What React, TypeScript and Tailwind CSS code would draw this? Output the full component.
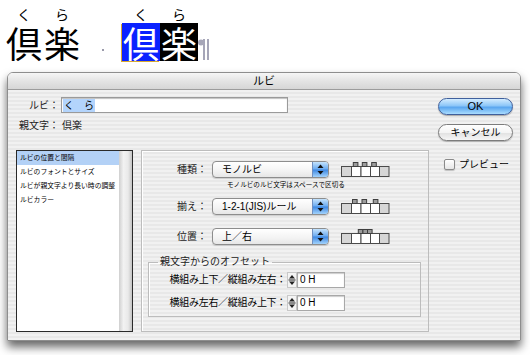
const stripes =
  'bg-[repeating-linear-gradient(180deg,#f1f1f1_0px,#f1f1f1_2px,#e8e8e8_2px,#e8e8e8_4px)]'

function RubyColumn({ rt, base, boxed }: { rt: string; base: string; boxed?: string }) {
  return (
    <div className="flex flex-col items-center w-[38px]">
      <span className="h-[16px] text-[14px] leading-[15px]">{rt}</span>
      <span className={`h-[38px] w-[38px] text-center text-[36px] leading-[39px] ${boxed ?? ''}`}>{base}</span>
    </div>
  )
}

function PopupArrows() {
  return (
    <svg width="7" height="11" viewBox="0 0 7 11">
      <path d="M3.5 0.5 L6.5 4 L0.5 4 Z" fill="#111" />
      <path d="M3.5 10.5 L6.5 7 L0.5 7 Z" fill="#111" />
    </svg>
  )
}

function Popup({ label }: { label: string }) {
  return (
    <div className="ml-[5px] flex h-[17px] w-[117px] overflow-hidden rounded-[4px] border border-[#8d8d8d] bg-[linear-gradient(180deg,#ffffff,#f3f3f3_60%,#e6e6e6)] shadow-[0_1px_1px_rgba(0,0,0,0.15)]">
      <span className="flex-1 pl-[9px] text-[10px] leading-[15px]">{label}</span>
      <span className="flex w-[16px] items-center justify-center border-l border-[#6f8fc0] bg-[linear-gradient(180deg,#c4e3fd,#6aaaf0_48%,#3d87e2_52%,#a3d3fc)]">
        <PopupArrows />
      </span>
    </div>
  )
}

// ruby layout diagrams next to each popup; bumps = ruby chars, cells = base chars
function LayoutIcon({ bumps }: { bumps: number[] }) {
  const cells = [
    [0.5, 10.5, true],
    [10.5, 20, false],
    [20, 29.5, false],
    [29.5, 38.5, false],
    [38.5, 48, true],
  ] as const
  return (
    <svg className="ml-[12px]" width="49" height="15" viewBox="0 0 49 15">
      {cells.map(([a, b, gray], i) => (
        <rect key={i} x={a} y={4.5} width={b - a} height={10} fill={gray ? '#d6d6d6' : '#fff'} stroke="#4a4a4a" strokeWidth="1" />
      ))}
      {bumps.map((x, i) => (
        <rect key={i} x={x} y={0.5} width={4.6} height={4} fill="#9c9c9c" stroke="#3f3f3f" strokeWidth="1" />
      ))}
    </svg>
  )
}

function Stepper() {
  return (
    <svg className="ml-[1px]" width="10" height="16" viewBox="0 0 10 16">
      <rect x="0.5" y="0.5" width="9" height="15" fill="#f4f4f4" stroke="#c8c8c8" />
      <path d="M5 3 L8 6.5 L2 6.5 Z" fill="#222" />
      <line x1="1.5" y1="8" x2="8.5" y2="8" stroke="#222" strokeWidth="1" />
      <path d="M5 13 L8 9.5 L2 9.5 Z" fill="#222" />
    </svg>
  )
}

function OffsetRow({ label, className }: { label: string; className?: string }) {
  return (
    <div className={`flex h-[16px] items-center ${className ?? ''}`}>
      <span className="w-[137px] text-right text-[10px] leading-[16px] tracking-[-0.3px]">{label}</span>
      <Stepper />
      <div className="h-[16px] w-[48px] border border-[#a8a8a8] bg-white pl-[2px] text-[10px] leading-[13px] shadow-[inset_0_1px_1px_rgba(0,0,0,0.2)]">
        0 H
      </div>
    </div>
  )
}

const listItems = ['ルビの位置と間隔', 'ルビのフォントとサイズ', 'ルビが親文字より長い時の調整', 'ルビカラー']

export default function App() {
  return (
    <div className="h-[355px] w-[530px] overflow-hidden bg-white text-black">
      {/* sample text with mono ruby */}
      <div className="flex h-[72px] items-start pl-[5px] pt-[7px] font-['Noto_Sans_CJK_JP',sans-serif]">
        <RubyColumn rt="く" base="倶" />
        <RubyColumn rt="ら" base="楽" />
        <span className="ml-[21px] mt-[42px] h-[2px] w-[2px] bg-[#9a9aaa]" />
        <div className="ml-[18px] flex">
          <RubyColumn rt="く" base="倶" boxed="bg-[#0a22ff] text-white shadow-[-1px_1px_0_#d8a830]" />
          <RubyColumn rt="ら" base="楽" boxed="bg-black text-white" />
        </div>
        <svg className="mt-[31px]" width="12" height="22" viewBox="0 0 12 22">
          <circle cx="3" cy="4.5" r="3" fill="#a6a6b8" />
          <rect x="5" y="1" width="2" height="21" fill="#a6a6b8" />
          <rect x="9" y="1" width="2" height="21" fill="#a6a6b8" />
        </svg>
      </div>

      {/* dialog */}
      <div className="ml-[7px] flex h-[269px] w-[514px] flex-col overflow-hidden rounded-t-[6px] border border-[#8e8e8e] font-['Liberation_Sans','Noto_Sans_CJK_JP',sans-serif] shadow-[0_6px_10px_rgba(0,0,0,0.6)]">
        <div className="flex h-[17px] shrink-0 items-center justify-center border-b border-[#9c9c9c] bg-[linear-gradient(180deg,#f6f6f6,#e4e4e4_50%,#d6d6d6)] text-[11px]">
          ルビ
        </div>
        <div className={`flex flex-1 pl-[8px] pr-[7px] ${stripes}`}>
          <div className="flex w-[413px] flex-col pt-[7px]">
            <div className="flex h-[16px] items-center">
              <span className="w-[43px] text-right text-[10px] text-[#222]">ルビ：</span>
              <div className="ml-[2px] flex h-[16px] w-[227px] items-center border border-[#9a9a9a] bg-white pl-[1px] shadow-[inset_0_1px_1px_rgba(0,0,0,0.25)]">
                <span className="bg-[#b3d4fc] px-[1px] text-[10px] leading-[13px]">く　ら</span>
              </div>
            </div>
            <div className="mt-[6px] flex h-[12px] items-center text-[10px] text-[#222]">
              <span className="w-[43px] text-right">親文字：</span>
              <span className="pl-[3px]">倶楽</span>
            </div>

            <div className="mt-[19px] flex h-[182px] gap-[8px]">
              {/* category list */}
              <div className="flex w-[117px] border border-[#2a2a2a] bg-white">
                <div className="flex-1">
                  {listItems.map((t, i) => (
                    <div
                      key={t}
                      className={`h-[14px] pl-[3px] text-[6.8px] leading-[14px] whitespace-nowrap ${i === 0 ? 'bg-[#b3d1f6]' : ''}`}
                    >
                      {t}
                    </div>
                  ))}
                </div>
                <div className="w-[13px] bg-[linear-gradient(90deg,#cfcfcf,#f2f2f2_35%,#e9e9e9_70%,#c4c4c4)]" />
              </div>

              {/* settings panel */}
              <div className="flex w-[288px] flex-col border border-[#bdbdbd] pt-[10px] shadow-[inset_1px_1px_0_#ffffff]">
                <div className="flex h-[17px] items-center">
                  <span className="w-[65px] text-right text-[10px] text-[#222]">種類：</span>
                  <Popup label="モノルビ" />
                  <LayoutIcon bumps={[12.3, 21.3, 30.7]} />
                </div>
                <div className="mt-[3px] h-[8px] pl-[85px] text-[6.6px] leading-[8px] whitespace-nowrap">
                  モノルビのルビ文字はスペースで区切る
                </div>
                <div className="mt-[9px] flex h-[17px] items-center">
                  <span className="w-[65px] text-right text-[10px] text-[#222]">揃え：</span>
                  <Popup label="1-2-1(JIS)ルール" />
                  <LayoutIcon bumps={[11.5, 21, 32.3]} />
                </div>
                <div className="mt-[13px] flex h-[17px] items-center">
                  <span className="w-[65px] text-right text-[10px] text-[#222]">位置：</span>
                  <Popup label="上／右" />
                  <LayoutIcon bumps={[17.3, 21.9, 26.5]} />
                </div>

                <fieldset className="ml-[6px] mt-[11px] w-[273px] border border-[#bcbcbc] pb-[5px] shadow-[inset_1px_1px_0_#ffffff]">
                  <legend className="ml-[9px] px-[2px] text-[10px] leading-[12px] text-[#222]">親文字からのオフセット</legend>
                  <OffsetRow label="横組み上下／縦組み左右：" className="mt-[4px]" />
                  <OffsetRow label="横組み左右／縦組み上下：" className="mt-[7px]" />
                </fieldset>
              </div>
            </div>
          </div>

          {/* buttons */}
          <div className="ml-[9px] flex w-[75px] flex-col pt-[8px]">
            <button className="h-[17px] rounded-full border border-[#3f5f9c] bg-[linear-gradient(180deg,#d3ecff,#8cc6f8_45%,#5aa6ef_55%,#a9dcff)] text-[11px] leading-[15px] shadow-[0_1px_1px_rgba(0,0,0,0.3)]">
              OK
            </button>
            <button className="mt-[9px] h-[17px] rounded-full border border-[#7c7c7c] bg-[linear-gradient(180deg,#ffffff,#f4f4f4_50%,#e2e2e2_55%,#f6f6f6)] text-[10px] leading-[15px] shadow-[0_1px_1px_rgba(0,0,0,0.25)]">
              キャンセル
            </button>
            <label className="mt-[18px] flex items-center gap-[4px] pl-[6px]">
              <span className="h-[11px] w-[11px] rounded-[2px] border border-[#8a8a8a] bg-[linear-gradient(180deg,#ffffff,#e6e6e6)] shadow-[0_1px_1px_rgba(0,0,0,0.2)]" />
              <span className="text-[10px] leading-[11px]">プレビュー</span>
            </label>
          </div>
        </div>
      </div>
    </div>
  )
}
